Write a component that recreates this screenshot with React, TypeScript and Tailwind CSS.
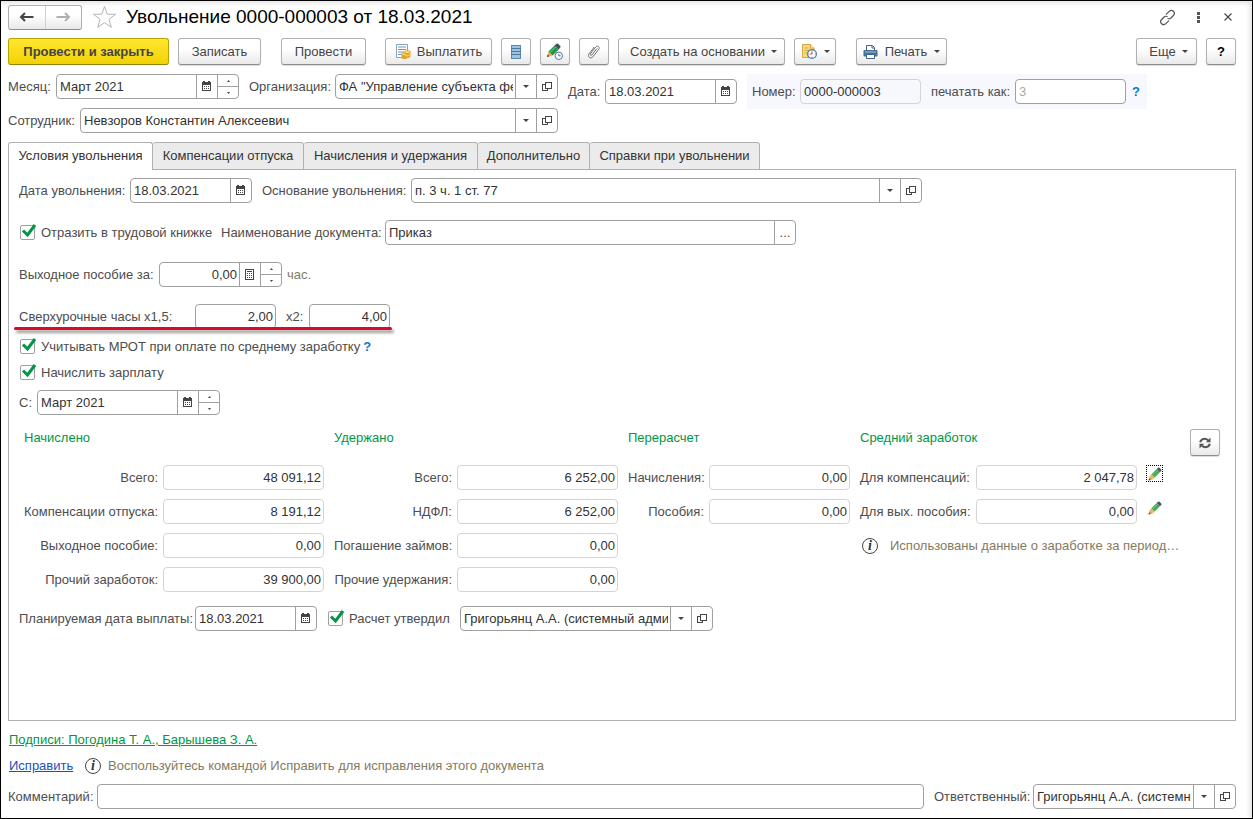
import { useId, useState, type ReactNode } from "react"

const toolButton =
  "h-[27px] shrink-0 flex items-center justify-center rounded-[3px] border border-[#b0b0b0] border-b-[#8c8c8c] bg-linear-to-b from-white from-40% to-[#e9e9e9] shadow-[0_1px_1px_rgba(0,0,0,0.15)] text-[#444] hover:to-[#dcdcdc]"

const tabs = [
  { title: "Условия увольнения", width: "w-[145px]" },
  { title: "Компенсации отпуска", width: "w-[151px]" },
  { title: "Начисления и удержания", width: "w-[174px]" },
  { title: "Дополнительно", width: "w-[112px]" },
  { title: "Справки при увольнении", width: "w-[170px]" },
]

/* ---------- icons ---------- */

function CalendarIcon() {
  return (
    <svg width="11" height="11" viewBox="0 0 11 11" shapeRendering="crispEdges" fill="#444">
      <path d="M0 1h9v3H0zM1 0h2v1H1zM6 0h2v1H6z" />
      <path d="M0 4h1v6H0zM8 4h1v6H8zM0 9h9v1H0z" />
      <path d="M2 5h1v1H2zM4 5h1v1H4zM6 5h1v1H6zM2 7h1v1H2zM4 7h1v1H4zM6 7h1v1H6z" />
    </svg>
  )
}

function CalculatorIcon() {
  return (
    <svg width="11" height="12" viewBox="0 0 11 12" shapeRendering="crispEdges" fill="#444">
      <path d="M0 0h9v11H0zM1 1v9h7V1z" fillRule="evenodd" />
      <path d="M2 2h5v1H2z" />
      <path d="M2 4h1v1H2zM4 4h1v1H4zM6 4h1v1H6zM2 6h1v1H2zM4 6h1v1H4zM6 6h1v1H6zM2 8h1v1H2zM4 8h1v1H4zM6 8h1v1H6z" />
    </svg>
  )
}

function OpenIcon() {
  return (
    <svg width="11" height="11" viewBox="0 0 11 11" fill="none" stroke="#444" shapeRendering="crispEdges">
      <path d="M3.500 1.500h6v6h-6zM3 3.500H.5v6h5V8" />
    </svg>
  )
}

function Caret() {
  return (
    <svg width="6" height="3" viewBox="0 0 6 3" fill="#444">
      <path d="M0 0h6L3 3z" />
    </svg>
  )
}

function PencilIcon() {
  return (
    <svg width="14" height="14" viewBox="0 0 14 14" className="shrink-0">
      <path d="M.5 13.500l1.300-4.500 3.200 3.200z" fill="#e9a040" />
      <path d="M.5 13.500l.6-2 1.400 1.400z" fill="#54401f" />
      <path d="M1.800 9l1.700-1.700 3.200 3.200L5 12.200z" fill="#f2b050" />
      <path d="M3.500 7.300l5.200-5.200 3.200 3.200-5.200 5.200z" fill="#45ad55" />
      <path d="M4.500 8.300l5.200-5.200" stroke="#6cc878" />
      <path d="M8.700 2.100L10.100.8q.7-.6 1.400 0l1.700 1.700q.6.700 0 1.400l-1.300 1.400z" fill="#46546a" />
    </svg>
  )
}

function PencilClockIcon() {
  return (
    <svg width="18" height="18" viewBox="0 0 18 18">
      <path d="M1 14l1.500-5.500 4 3.900z" fill="#eda84a" />
      <path d="M1 14l.7-2.400 1.700 1.700z" fill="#444" />
      <path d="M2.500 8.500l6-6 4.200 4.100-6 6z" fill="#1f9648" />
      <path d="M4 9.500l6-6" stroke="#4cbc6c" strokeWidth="1.200" />
      <path d="M8.500 2.500L10.500.7q.8-.6 1.600.1l2.200 2.200q.6.800 0 1.500l-1.600 2.100z" fill="#46505e" />
      <circle cx="12.800" cy="12.800" r="3.700" fill="#fff" stroke="#4f7496" />
      <path d="M12.800 10.800v2h1.900" fill="none" stroke="#4f7496" />
    </svg>
  )
}

function PayIcon() {
  return (
    <svg width="16" height="17" viewBox="0 0 16 17">
      <path d="M1.500 1.500h11v13h-11z" fill="#fff" stroke="#86a2b8" />
      <path d="M3 4h8M3 6.500h8M3 9h6M3 11.500h4" stroke="#7393ac" />
      <path d="M6.500 11v3.500c0 2 6 2 6 0V11z" fill="#e0a030" />
      <ellipse cx="9.500" cy="11.300" rx="3" ry="1.500" fill="#f8d56a" stroke="#c98b20" strokeWidth=".6" />
      <path d="M9.500 9v4.500c0 2 6 2 6 0V9z" fill="#e8ab32" />
      <ellipse cx="12.500" cy="9" rx="3" ry="1.500" fill="#fbdc78" stroke="#c98b20" strokeWidth=".6" />
      <path d="M9.500 11.200c0 1.700 6 1.700 6 0" fill="none" stroke="#fbdc78" strokeWidth=".8" />
    </svg>
  )
}

function ListIcon() {
  return (
    <svg width="12" height="14" viewBox="0 0 12 14" shapeRendering="crispEdges">
      <path d="M1 0h10v14H1z" fill="#5d88ad" />
      <path d="M2 1h8v2H2zM2 4h8v2H2zM2 7h8v2H2zM2 10h8v3H2z" fill="#9cc3e0" />
      <path d="M1 3h10v1H1zM1 6h10v1H1zM1 9h10v1H1z" fill="#4f7799" />
    </svg>
  )
}

function ClipIcon() {
  return (
    <svg width="14" height="16" viewBox="0 0 14 16" fill="none" stroke="#707070" strokeLinecap="round">
      <path d="M9.800 4.800l-5 6.200c-.8 1-2.200-.1-1.400-1.200L8.800 3c1.600-2 4.500.2 3 2.300l-5.900 7.500c-2.200 2.700-6-.3-3.900-3L7 3.400" />
    </svg>
  )
}

function DocumentClockIcon() {
  return (
    <svg width="17" height="17" viewBox="0 0 17 17">
      <path d="M1.500 1.500h8l3.500 3.500v9.500H1.500z" fill="#f6d982" stroke="#d3a945" />
      <path d="M9.500 1.500V5H13" fill="#fff3c4" stroke="#d3a945" />
      <path d="M3.500 5h4M3.500 7.500h6M3.500 10h3" stroke="#d3a945" />
      <circle cx="11" cy="11" r="4.400" fill="#fff" stroke="#4c7ba6" strokeWidth="1.200" />
      <path d="M11 8.500V11h-1.800" stroke="#d33" fill="none" />
      <path d="M11 7.500v.8M11 13.700v.8M7.500 11h.8M13.700 11h.8" stroke="#4c7ba6" />
    </svg>
  )
}

function PrinterIcon() {
  return (
    <svg width="15" height="14" viewBox="0 0 15 14">
      <path d="M3.500 5.500v-5h6l2 2v3z" fill="#fff" stroke="#3f6488" />
      <path d="M9 1v2h2" fill="none" stroke="#3f6488" />
      <rect x=".5" y="5" width="14" height="6.500" rx="1.200" fill="#456f95" />
      <path d="M2 7h11" stroke="#a9c5dc" />
      <path d="M3.500 9.500h8v4h-8z" fill="#fff" stroke="#3f6488" />
    </svg>
  )
}

function InfoIcon() {
  return (
    <span className="size-4 shrink-0 rounded-full border border-[#444] flex items-center justify-center font-['Liberation_Serif',serif] italic font-bold text-[14px] leading-none text-[#333]">
      i
    </span>
  )
}

/* ---------- fields ---------- */

function FieldButton({ label, children }: { label: string; children: ReactNode }) {
  return (
    <button type="button" aria-label={label} className="w-[21px] shrink-0 border-l border-[#a0a0a0] flex items-center justify-center hover:bg-gray-100">
      {children}
    </button>
  )
}

function Spinner() {
  return (
    <div className="w-[21px] shrink-0 border-l border-[#a0a0a0] flex flex-col">
      <button type="button" aria-label="Увеличить" className="flex-1 flex items-center justify-center border-b border-[#a0a0a0]">
        <svg width="3" height="2" viewBox="0 0 3 2" fill="#444"><path d="M0 2h3L1.500 0z" /></svg>
      </button>
      <button type="button" aria-label="Уменьшить" className="flex-1 flex items-center justify-center">
        <svg width="3" height="2" viewBox="0 0 3 2" fill="#444"><path d="M0 0h3L1.500 2z" /></svg>
      </button>
    </div>
  )
}

interface FieldProps {
  label: string
  value?: string
  placeholder?: string
  labelWidth?: string
  width: string
  align?: "left" | "right"
  readOnly?: boolean
  grow?: boolean
  children?: ReactNode
}

function Field({ label, value = "", placeholder, labelWidth = "", width, align = "left", readOnly = false, grow = false, children }: Readonly<FieldProps>) {
  const id = useId()
  return (
    <div className={`flex items-center ${grow ? "flex-1 min-w-0" : ""}`}>
      <label htmlFor={id} className={`shrink-0 whitespace-nowrap ${labelWidth}`}>{label}</label>
      <div className={`h-[25px] flex rounded-[4px] border overflow-hidden ${readOnly ? "border-[#d4d4d4]" : "border-[#a0a0a0] bg-white"} ${width}`}>
        <input
          id={id}
          defaultValue={value}
          placeholder={placeholder}
          readOnly={readOnly}
          className={`min-w-0 flex-1 outline-none text-[#333] placeholder:text-[#aaa] ${align === "right" ? "text-right pr-[2px]" : "pl-[3px]"}`}
        />
        {children}
      </div>
    </div>
  )
}

interface SelectFieldProps {
  label: string
  value: string
  labelWidth?: string
  width: string
  hideLabel?: boolean
  grow?: boolean
}

function SelectField({ label, value, labelWidth = "", width, hideLabel = false, grow = false }: Readonly<SelectFieldProps>) {
  const id = useId()
  return (
    <div className={`flex items-center ${grow ? "flex-1 min-w-0" : ""}`}>
      {!hideLabel && <label htmlFor={id} className={`shrink-0 whitespace-nowrap ${labelWidth}`}>{label}</label>}
      <div className={`h-[25px] flex rounded-[4px] border border-[#a0a0a0] bg-white overflow-hidden ${width}`}>
        <div className="relative flex-1 min-w-0 flex">
          <select
            id={id}
            aria-label={hideLabel ? label : undefined}
            className="w-full appearance-none outline-none pl-[3px] pr-[23px] text-[#333] bg-transparent"
          >
            <option>{value}</option>
          </select>
          <span className="absolute inset-y-0 right-0 w-[21px] border-l border-[#a0a0a0] flex items-center justify-center pointer-events-none">
            <Caret />
          </span>
        </div>
        <FieldButton label="Открыть"><OpenIcon /></FieldButton>
      </div>
    </div>
  )
}

function Check({ label }: { label: string }) {
  return (
    <label className="flex items-center gap-[5px] whitespace-nowrap">
      <span className="relative size-4 ml-px shrink-0 flex">
        <input type="checkbox" defaultChecked className="peer size-[15px] appearance-none border border-[#a0a0a0] rounded-[2px] bg-white" />
        <svg width="16" height="16" viewBox="0 0 16 16" className="absolute left-px -top-px hidden peer-checked:block pointer-events-none">
          <path d="M2 6.500l4.500 4.500L14 1" fill="none" stroke="#009646" strokeWidth="3" />
        </svg>
      </span>
      {label}
    </label>
  )
}

function TotalField({ label, value }: { label: string; value: string }) {
  const id = useId()
  return (
    <>
      <label htmlFor={id} className="text-right whitespace-nowrap">{label}</label>
      <input id={id} readOnly defaultValue={value} className="w-full h-[25px] border border-[#d4d4d4] rounded-[4px] text-right pr-[2px] text-[#333] outline-none" />
    </>
  )
}

function TotalGroup({ title, columns, rows }: { title: string; columns: string; rows: string[][] }) {
  return (
    <section>
      <h2 className="h-[18px] leading-[18px] mb-[18px] text-[#009646]">{title}</h2>
      <div className={`grid items-center gap-x-[5px] gap-y-[9px] ${columns}`}>
        {rows.map(([label, value]) => (
          <TotalField key={label} label={label} value={value} />
        ))}
      </div>
    </section>
  )
}

/* ---------- page ---------- */

function TitleBar() {
  return (
    <header className="flex items-center h-[26px]">
      <div className="flex w-[74px] h-[25px] rounded-[3px] border border-[#b0b0b0] border-b-[#8c8c8c] bg-linear-to-b from-white from-40% to-[#e9e9e9]">
        <button type="button" aria-label="Назад" className="flex-1 flex items-center justify-center border-r border-[#d0d0d0]">
          <svg width="15" height="10" viewBox="0 0 15 10" fill="none" stroke="#444" strokeWidth="2"><path d="M14.500 5H2M6 1L2 5l4 4" /></svg>
        </button>
        <button type="button" aria-label="Вперед" className="flex-1 flex items-center justify-center">
          <svg width="15" height="10" viewBox="0 0 15 10" fill="none" stroke="#b0b0b0" strokeWidth="2"><path d="M.5 5H13M9 1l4 4-4 4" /></svg>
        </button>
      </div>
      <button type="button" aria-label="В избранное" className="ml-[10px]">
        <svg width="25" height="24" viewBox="0 0 25 24" fill="#fff" stroke="#b4b4b4"><path d="M12.500 1.500l2.700 7.700 8.300.1-6.600 5 2.400 8-6.800-4.700-6.800 4.700 2.400-8-6.600-5 8.300-.1z" /></svg>
      </button>
      <h1 className="ml-[9px] text-[19px] leading-6 text-black whitespace-nowrap">Увольнение 0000-000003 от 18.03.2021</h1>
      <div className="ml-auto flex items-center gap-[14px]">
        <button type="button" aria-label="Получить ссылку">
          <svg width="17" height="17" viewBox="0 0 17 17" fill="none" stroke="#555" strokeWidth="1.200" strokeLinecap="round">
            <path d="M7.300 5.200l2.900-2.900c2.800-2.700 7 1.200 4.200 4.200l-2.500 2.500c-.9.800-2 .9-3 .5" />
            <path d="M9.700 11.800l-2.900 2.900c-2.800 2.700-7-1.200-4.200-4.200l2.500-2.500c.9-.8 2-.9 3-.5" />
          </svg>
        </button>
        <button type="button" aria-label="Меню" className="w-4 flex justify-center">
          <svg width="3" height="11" viewBox="0 0 3 11" fill="#555"><path d="M0 0h3v3H0zM0 4h3v3H0zM0 8h3v3H0z" /></svg>
        </button>
        <button type="button" aria-label="Закрыть" className="w-4 flex justify-center">
          <svg width="8" height="8" viewBox="0 0 8 8" stroke="#444" strokeWidth="1.100"><path d="M.5.5l7 7M7.500.5l-7 7" /></svg>
        </button>
      </div>
    </header>
  )
}

function Toolbar() {
  return (
    <div className="mt-2 flex items-center gap-[9px] whitespace-nowrap">
      <button type="button" className="w-[161px] h-[27px] shrink-0 rounded-[3px] border border-[#b9a300] border-b-[#948200] bg-linear-to-b from-[#ffe72c] to-[#f2d200] font-bold text-[#444]">
        Провести и закрыть
      </button>
      <button type="button" className={`w-[83px] ${toolButton}`}>Записать</button>
      <button type="button" className={`w-[85px] ml-[11px] ${toolButton}`}>Провести</button>
      <button type="button" className={`w-[107px] ml-[10px] gap-[6px] ${toolButton}`}><PayIcon />Выплатить</button>
      <button type="button" aria-label="Список" className={`w-[30px] ${toolButton}`}><ListIcon /></button>
      <button type="button" aria-label="Изменить позже" className={`w-[30px] ${toolButton}`}><PencilClockIcon /></button>
      <button type="button" aria-label="Файлы" className={`w-[30px] ${toolButton}`}><ClipIcon /></button>
      <button type="button" className={`w-[167px] gap-[6px] pl-1 ${toolButton}`}>Создать на основании<Caret /></button>
      <button type="button" aria-label="Напоминания" className={`w-[42px] gap-[6px] ${toolButton}`}><DocumentClockIcon /><Caret /></button>
      <button type="button" className={`w-[91px] ml-[11px] gap-[7px] ${toolButton}`}><PrinterIcon />Печать<Caret /></button>
      <button type="button" className={`w-[61px] ml-auto gap-[6px] pl-1 ${toolButton}`}>Еще<Caret /></button>
      <button type="button" aria-label="Справка" className={`w-[30px] ${toolButton}`}><span className="font-bold text-black">?</span></button>
    </div>
  )
}

function DocumentHeader() {
  return (
    <div className="mt-[9px] flex items-start gap-[10px]">
      <div className="w-[550px] shrink-0 flex flex-col gap-[9px]">
        <div className="flex gap-[10px]">
          <Field label="Месяц:" value="Март 2021" labelWidth="w-12" width="w-[183px]">
            <FieldButton label="Выбрать месяц"><CalendarIcon /></FieldButton>
            <Spinner />
          </Field>
          <SelectField label="Организация:" value={'ФА "Управление субъекта федерации"'} labelWidth="w-[86px]" width="flex-1 min-w-0" grow />
        </div>
        <SelectField label="Сотрудник:" value="Невзоров Константин Алексеевич" labelWidth="w-[72px]" width="flex-1 min-w-0" />
      </div>
      <div className="flex items-center gap-[10px] h-[35px]">
        <Field label="Дата:" value="18.03.2021" labelWidth="w-[37px]" width="w-[132px]">
          <FieldButton label="Выбрать дату"><CalendarIcon /></FieldButton>
        </Field>
        <div className="h-[35px] px-[5px] flex items-center gap-[10px] bg-[#f7f8fe]">
          <Field label="Номер:" value="0000-000003" labelWidth="w-12" width="w-[121px]" readOnly />
          <div className="flex items-center gap-[6px]">
            <Field label="печатать как:" placeholder="3" labelWidth="w-[84px]" width="w-[111px]" />
            <button type="button" aria-label="Подсказка" className="w-[10px] text-left font-bold text-[#0b79c9]">?</button>
          </div>
        </div>
      </div>
    </div>
  )
}

function Totals() {
  return (
    <div className="mt-[14px] pl-[5px] pr-[5px] flex items-start gap-[10px]">
      <TotalGroup
        title="Начислено"
        columns="grid-cols-[134px_161px]"
        rows={[
          ["Всего:", "48 091,12"],
          ["Компенсации отпуска:", "8 191,12"],
          ["Выходное пособие:", "0,00"],
          ["Прочий заработок:", "39 900,00"],
        ]}
      />
      <TotalGroup
        title="Удержано"
        columns="grid-cols-[118px_161px]"
        rows={[
          ["Всего:", "6 252,00"],
          ["НДФЛ:", "6 252,00"],
          ["Погашение займов:", "0,00"],
          ["Прочие удержания:", "0,00"],
        ]}
      />
      <TotalGroup
        title="Перерасчет"
        columns="grid-cols-[76px_141px]"
        rows={[
          ["Начисления:", "0,00"],
          ["Пособия:", "0,00"],
        ]}
      />
      <section>
        <h2 className="h-[18px] leading-[18px] mb-[18px] text-[#009646]">Средний заработок</h2>
        <div className="grid grid-cols-[111px_161px_21px] items-center gap-x-[5px] gap-y-[9px] [&>label]:text-left">
          <TotalField label="Для компенсаций:" value="2 047,78" />
          <button type="button" aria-label="Изменить средний заработок для компенсаций" className="size-[17px] ml-1 self-start flex items-center justify-center border border-dotted border-black">
            <PencilIcon />
          </button>
          <TotalField label="Для вых. пособия:" value="0,00" />
          <button type="button" aria-label="Изменить средний заработок для пособия" className="size-[17px] ml-1 self-start flex items-center justify-center">
            <PencilIcon />
          </button>
        </div>
        <p className="mt-[9px] h-[25px] pl-[2px] flex items-center gap-3 whitespace-nowrap text-[#857a5f]">
          <InfoIcon />
          Использованы данные о заработке за период…
        </p>
      </section>
      <button type="button" aria-label="Обновить" className={`w-[30px] ml-auto ${toolButton}`}>
        <svg width="12" height="12" viewBox="0 0 12 12" fill="none" stroke="#555" strokeWidth="2">
          <path d="M1.200 5.200C2 1.500 6.500.8 9 3.200M10.800 6.800C10 10.500 5.500 11.200 3 8.800" />
          <path d="M11.500.5V5.200H6.800zM.5 11.500V6.800h4.700z" fill="#555" stroke="none" />
        </svg>
      </button>
    </div>
  )
}

function ConditionsPanel() {
  return (
    <div role="tabpanel" className="-mt-px flex-1 border border-[#b0b0b0] px-[10px] pt-2 pb-4">
      <div className="flex gap-[10px]">
        <Field label="Дата увольнения:" value="18.03.2021" labelWidth="w-[111px]" width="w-[122px]">
          <FieldButton label="Выбрать дату"><CalendarIcon /></FieldButton>
        </Field>
        <SelectField label="Основание увольнения:" value="п. 3 ч. 1 ст. 77" labelWidth="w-[149px]" width="w-[511px]" />
      </div>

      <div className="mt-[17px] flex items-center">
        <div className="w-[202px]"><Check label="Отразить в трудовой книжке" /></div>
        <Field label="Наименование документа:" value="Приказ" labelWidth="w-[164px]" width="w-[411px]">
          <FieldButton label="Выбрать">...</FieldButton>
        </Field>
      </div>

      <div className="mt-[17px] flex items-center gap-[5px]">
        <Field label="Выходное пособие за:" value="0,00" labelWidth="w-[140px]" width="w-[123px]" align="right">
          <FieldButton label="Калькулятор"><CalculatorIcon /></FieldButton>
          <Spinner />
        </Field>
        <span className="text-[#857a5f]">час.</span>
      </div>

      <div className="relative mt-[17px] w-fit flex gap-[10px]">
        <Field label="Сверхурочные часы x1,5:" value="2,00" labelWidth="w-[176px]" width="w-[81px]" align="right" />
        <Field label="x2:" value="4,00" labelWidth="w-[23px]" width="w-[81px]" align="right" />
        <span className="absolute -left-[5px] -right-[2px] -bottom-px h-[3px] rounded-full bg-[#dc0a28] shadow-[2px_3px_3px_rgba(0,0,0,0.4)]" />
      </div>

      <div className="mt-[9px] h-[18px] flex items-center gap-[3px]">
        <Check label="Учитывать МРОТ при оплате по среднему заработку" />
        <button type="button" aria-label="Подсказка" className="font-bold text-[#0b79c9]">?</button>
      </div>
      <div className="mt-2 h-[18px] flex items-center">
        <Check label="Начислить зарплату" />
      </div>
      <div className="mt-2 flex">
        <Field label="С:" value="Март 2021" labelWidth="w-[18px]" width="w-[183px]">
          <FieldButton label="Выбрать месяц"><CalendarIcon /></FieldButton>
          <Spinner />
        </Field>
      </div>

      <Totals />

      <div className="mt-[14px] flex items-center gap-[10px]">
        <Field label="Планируемая дата выплаты:" value="18.03.2021" labelWidth="w-[176px]" width="w-[122px]">
          <FieldButton label="Выбрать дату"><CalendarIcon /></FieldButton>
        </Field>
        <div className="w-[123px]"><Check label="Расчет утвердил" /></div>
        <SelectField label="Расчет утвердил" value="Григорьянц А.А. (системный администратор)" width="w-[253px]" hideLabel />
      </div>
    </div>
  )
}

export default function App() {
  const [activeTab, setActiveTab] = useState(0)

  return (
    <main className="min-h-screen flex flex-col border border-black bg-white pt-[3px] pb-[9px] pl-[7px] pr-4 font-['Liberation_Sans',Arial,sans-serif] text-[13px] leading-[18px] text-[#4d4d4d] shadow-[inset_-4px_4px_5px_-2px_rgba(0,0,0,0.12)]">
      <TitleBar />
      <Toolbar />
      <DocumentHeader />

      <div role="tablist" className="mt-[9px] flex h-7 items-stretch">
        {tabs.map((tab, index) => (
          <button
            key={tab.title}
            type="button"
            role="tab"
            aria-selected={index === activeTab}
            onClick={() => setActiveTab(index)}
            className={`border-t border-r border-[#b0b0b0] whitespace-nowrap text-[#333] rounded-t-[3px] first:border-l ${tab.width} ${
              index === activeTab ? "relative z-10 bg-white pb-px" : "border-b bg-[#ebebeb]"
            }`}
          >
            {tab.title}
          </button>
        ))}
      </div>
      <ConditionsPanel />

      <footer className="mt-[10px]">
        <a href="#signatures" className="ml-px underline text-[#009646]">Подписи: Погодина Т. А., Барышева З. А.</a>
        <div className="mt-2 ml-px flex items-center">
          <a href="#fix" className="w-[76px] underline text-[#1b4fc4]">Исправить</a>
          <InfoIcon />
          <span className="ml-[7px] text-[#857a5f]">Воспользуйтесь командой Исправить для исправления этого документа</span>
        </div>
        <div className="mt-[9px] flex gap-[10px]">
          <Field label="Комментарий:" labelWidth="w-[89px]" width="flex-1 min-w-0" grow />
          <SelectField label="Ответственный:" value="Григорьянц А.А. (системный администратор)" labelWidth="w-[99px]" width="w-[203px]" />
        </div>
      </footer>
    </main>
  )
}
